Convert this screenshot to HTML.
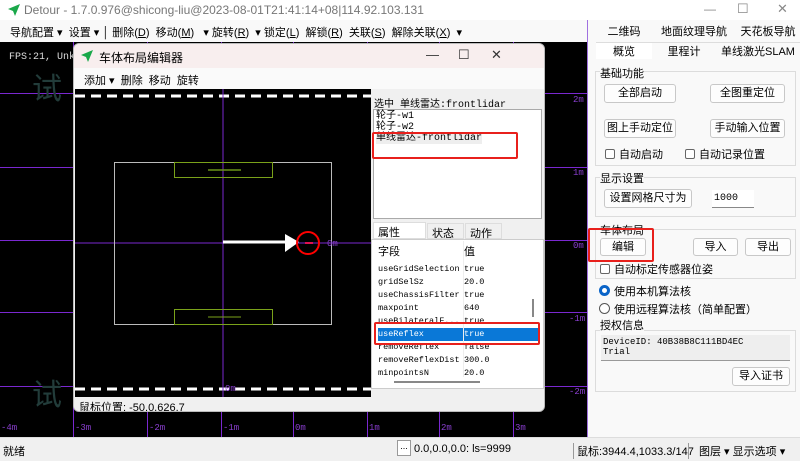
<!DOCTYPE html><html><head><meta charset="utf-8"><style>
*{margin:0;padding:0;box-sizing:border-box}
body{width:800px;height:461px;overflow:hidden;position:relative;background:#f0f0f0;font-family:"Liberation Sans","Noto Sans CJK SC",sans-serif;font-size:11px;color:#000}
.a{position:absolute;white-space:nowrap}
.btn{position:absolute;background:#fdfdfd;border:1px solid #c8c8c8;border-radius:3px;text-align:center;font-size:11px}
.mono{font-family:"Liberation Mono","Noto Sans CJK SC",monospace}
.grp{position:absolute;border:1px solid #dcdcdc;background:#f9f9f9}
.cb{display:inline-block;width:10px;height:10px;border:1px solid #666;border-radius:2px;background:#fff;vertical-align:-1px;margin-right:4px}
.lbl{position:absolute;color:#8a3fd0;font-size:9px;font-family:"Liberation Mono",monospace}
.r{height:13px;line-height:13px}.r span{display:inline-block;width:86px}
</style></head><body>
<div class="a" style="left:0;top:0;width:800px;height:20px;background:#fff"></div>
<svg class="a" style="left:7px;top:3px" width="14" height="14"><path d="M13 1 L1 6 L6 8 L8 13 Z" fill="#1aa84a"/></svg>
<div class="a" style="left:24px;top:3px;color:#777;font-size:12px">Detour - 1.7.0.976@shicong-liu@2023-08-01T21:41:14+08|114.92.103.131</div>
<div class="a" style="left:704px;top:2px;color:#888;font-size:12px">—</div>
<div class="a" style="left:737px;top:1px;color:#888;font-size:13px">☐</div>
<div class="a" style="left:777px;top:1px;color:#888;font-size:13px">✕</div>
<div class="a" style="left:0;top:20px;width:800px;height:22px;background:#f9f9f9"></div>
<div class="a" style="left:10px;top:24px;font-size:11px">导航配置 ▾ &nbsp;设置 ▾ │ 删除(<u>D</u>) &nbsp;移动(<u>M</u>) &nbsp; ▾ 旋转(<u>R</u>) &nbsp;▾ 锁定(<u>L</u>) &nbsp;解锁(<u>R</u>) &nbsp;关联(<u>S</u>) &nbsp;解除关联(<u>X</u>) &nbsp;▾</div>
<div class="a" style="left:0;top:42px;width:587px;height:395px;background:#000;overflow:hidden">
 <div class="a" style="left:0;top:51px;width:587px;height:1px;background:#7a28d0"></div>
 <div class="a" style="left:0;top:125px;width:587px;height:1px;background:#7a28d0"></div>
 <div class="a" style="left:0;top:198px;width:587px;height:1px;background:#7a28d0"></div>
 <div class="a" style="left:0;top:270px;width:587px;height:1px;background:#7a28d0"></div>
 <div class="a" style="left:0;top:344px;width:587px;height:1px;background:#7a28d0"></div>
 <div class="a" style="left:73px;top:0;width:1px;height:395px;background:#7a28d0"></div>
 <div class="a" style="left:147px;top:0;width:1px;height:395px;background:#7a28d0"></div>
 <div class="a" style="left:221px;top:0;width:1px;height:395px;background:#7a28d0"></div>
 <div class="a" style="left:293px;top:0;width:1px;height:395px;background:#7a28d0"></div>
 <div class="a" style="left:367px;top:0;width:1px;height:395px;background:#7a28d0"></div>
 <div class="a" style="left:439px;top:0;width:1px;height:395px;background:#7a28d0"></div>
 <div class="a" style="left:513px;top:0;width:1px;height:395px;background:#7a28d0"></div>
 <div class="a mono" style="left:9px;top:10px;color:#ddd;font-size:10px">FPS:21, Unknown</div>
 <div class="a" style="left:32px;top:22px;color:#223c3a;font-size:30px">试</div>
 <div class="a" style="left:32px;top:328px;color:#223c3a;font-size:30px">试</div>
 <div class="lbl" style="left:573px;top:53px">2m</div><div class="lbl" style="left:573px;top:126px">1m</div><div class="lbl" style="left:573px;top:199px">0m</div><div class="lbl" style="left:569px;top:272px">-1m</div><div class="lbl" style="left:569px;top:345px">-2m</div>
 <div class="lbl" style="left:1px;top:381px">-4m</div><div class="lbl" style="left:75px;top:381px">-3m</div><div class="lbl" style="left:149px;top:381px">-2m</div><div class="lbl" style="left:223px;top:381px">-1m</div><div class="lbl" style="left:295px;top:381px">0m</div><div class="lbl" style="left:369px;top:381px">1m</div><div class="lbl" style="left:441px;top:381px">2m</div><div class="lbl" style="left:515px;top:381px">3m</div>
</div>
<div class="a" style="left:73px;top:43px;width:472px;height:369px;background:#f0f0f0;border:1px solid #bbb;border-radius:6px;overflow:hidden">
 <div class="a" style="left:0;top:0;width:472px;height:24px;background:#f8eeee"></div>
 <svg class="a" style="left:6px;top:5px" width="14" height="14"><path d="M13 1 L1 6 L6 8 L8 13 Z" fill="#1aa84a"/></svg>
 <div class="a" style="left:25px;top:5px;font-size:12px">车体布局编辑器</div>
 <div class="a" style="left:352px;top:3px;font-size:13px;color:#333">—</div>
 <div class="a" style="left:384px;top:3px;font-size:13px;color:#333">☐</div>
 <div class="a" style="left:417px;top:3px;font-size:13px;color:#333">✕</div>
 <div class="a" style="left:0;top:24px;width:472px;height:21px;background:#fafafa"></div>
 <div class="a" style="left:10px;top:28px">添加 ▾ &nbsp;删除 &nbsp;移动 &nbsp;旋转</div>
 <svg class="a" style="left:1px;top:45px" width="296" height="308">
  <rect width="296" height="308" fill="#000"/>
  <line x1="0" y1="7" x2="296" y2="7" stroke="#fff" stroke-width="3" stroke-dasharray="10,6"/>
  <line x1="0" y1="300" x2="296" y2="300" stroke="#fff" stroke-width="3" stroke-dasharray="10,6"/>
  <line x1="148" y1="0" x2="148" y2="308" stroke="#7a28d0"/>
  <line x1="0" y1="154" x2="296" y2="154" stroke="#7a28d0"/>
  <rect x="39.5" y="73.5" width="217" height="162" fill="none" stroke="#bbb"/>
  <rect x="99.5" y="73.5" width="98" height="15" fill="none" stroke="#7aa21a"/>
  <rect x="99.5" y="220.5" width="98" height="15" fill="none" stroke="#7aa21a"/>
  <line x1="133" y1="81" x2="166" y2="81" stroke="#6a9418" stroke-width="1.5"/>
  <line x1="133" y1="228" x2="166" y2="228" stroke="#7aa21a"/>
  <line x1="148" y1="153" x2="212" y2="153" stroke="#fff" stroke-width="3"/>
  <path d="M210 145 L224 153 L210 163 Z" fill="#fff"/>
  <circle cx="233" cy="154" r="11" fill="none" stroke="#f00" stroke-width="2"/>
  <line x1="230" y1="154" x2="238" y2="154" stroke="#e01050" stroke-width="2"/>
  <text x="252" y="157" fill="#8a3fd0" font-size="9" font-family="Liberation Mono">0m</text>
  <text x="150" y="302" fill="#8a3fd0" font-size="9" font-family="Liberation Mono">0m</text>
 </svg>
 <div class="a" style="left:0;top:353px;width:472px;height:16px;background:#f0f0f0"></div>
 <div class="a" style="left:5px;top:355px">鼠标位置: -50.0,626.7</div>
 <div class="a mono" style="left:300px;top:51px;font-size:10px">选中 单线雷达:frontlidar</div>
 <div class="a mono" style="left:299px;top:65px;width:169px;height:110px;background:#fff;border:1px solid #aaa;font-size:10px;line-height:11px;padding:1px 2px">轮子-w1<br>轮子-w2<br><span style="background:#eee">单线雷达-frontlidar</span></div>
 <div class="a" style="left:298px;top:88px;width:146px;height:27px;border:2px solid #e8201c;border-radius:2px"></div>
 <div class="a" style="left:299px;top:178px;width:53px;height:17px;background:#fff;border:1px solid #ddd;padding:1px 4px">属性</div>
 <div class="a" style="left:353px;top:179px;width:37px;height:16px;border:1px solid #ddd;padding:1px 4px">状态</div>
 <div class="a" style="left:391px;top:179px;width:37px;height:16px;border:1px solid #ddd;padding:1px 4px">动作</div>
 <div class="a" style="left:297px;top:195px;width:173px;height:150px;background:#fff;border:1px solid #ccc"></div>
 <div class="a mono" style="left:304px;top:199px;width:160px;height:134px;font-size:8.5px;overflow:hidden">
  <div style="height:20px;line-height:18px;font-size:11px;font-family:'Liberation Sans','Noto Sans CJK SC',sans-serif"><span style="display:inline-block;width:86px">字段</span>值</div>
  <div class="r"><span>useGridSelection</span>true</div>
  <div class="r"><span>gridSelSz</span>20.0</div>
  <div class="r"><span>useChassisFilter</span>true</div>
  <div class="r"><span>maxpoint</span>640</div>
  <div class="r"><span>useBilateralF...</span>true</div>
  <div class="r" style="background:#0a78d7;color:#fff"><span>useReflex</span>true</div>
  <div class="r"><span>removeReflex</span>false</div>
  <div class="r"><span>removeReflexDist</span>300.0</div>
  <div class="r"><span>minpointsN</span>20.0</div>
 </div>
 <div class="a" style="left:389px;top:197px;width:1px;height:136px;background:#eee"></div>
 <div class="a" style="left:458px;top:255px;width:2px;height:18px;background:#888"></div>
 <div class="a" style="left:320px;top:337px;width:86px;height:2px;background:#888"></div>
 <div class="a" style="left:300px;top:278px;width:166px;height:23px;border:2px solid #e8201c;border-radius:2px"></div>
</div>
<div class="a" style="left:587px;top:20px;width:213px;height:417px;background:#f9f9f9;border-left:1px solid #a070e0"></div>
<div class="a" style="left:596px;top:23px;width:204px;height:19px;font-size:11px"><span style="display:inline-block;width:56px;text-align:center">二维码</span><span style="display:inline-block;width:84px;text-align:center">地面纹理导航</span><span style="display:inline-block;width:64px;text-align:center">天花板导航</span></div>
<div class="a" style="left:596px;top:42px;width:204px;height:20px;font-size:11px;border-top:1px solid #ddd"><span style="display:inline-block;width:56px;text-align:center;background:#fff">概览</span><span style="display:inline-block;width:64px;text-align:center">里程计</span><span style="display:inline-block;width:84px;text-align:center">单线激光SLAM</span></div>
<div class="grp" style="left:595px;top:71px;width:201px;height:95px"></div>
<div class="a" style="left:600px;top:65px;background:#f9f9f9">基础功能</div>
<div class="btn" style="left:604px;top:84px;width:72px;height:19px;line-height:17px">全部启动</div>
<div class="btn" style="left:710px;top:84px;width:75px;height:19px;line-height:17px">全图重定位</div>
<div class="btn" style="left:604px;top:119px;width:72px;height:19px;line-height:17px">图上手动定位</div>
<div class="btn" style="left:710px;top:119px;width:75px;height:19px;line-height:17px">手动输入位置</div>
<div class="a" style="left:605px;top:146px"><span class="cb"></span>自动启动</div>
<div class="a" style="left:685px;top:146px"><span class="cb"></span>自动记录位置</div>
<div class="grp" style="left:595px;top:177px;width:201px;height:40px"></div>
<div class="a" style="left:600px;top:170px;background:#f9f9f9">显示设置</div>
<div class="btn" style="left:604px;top:189px;width:88px;height:19px;line-height:17px">设置网格尺寸为</div>
<div class="a mono" style="left:712px;top:190px;width:42px;height:18px;background:#fff;border-bottom:1px solid #888;font-size:10px;padding:3px 2px">1000</div>
<div class="grp" style="left:595px;top:229px;width:201px;height:50px"></div>
<div class="a" style="left:600px;top:222px">车体布局</div>
<div class="btn" style="left:600px;top:238px;width:46px;height:18px;line-height:16px">编辑</div>
<div class="a" style="left:588px;top:228px;width:66px;height:34px;border:2px solid #e8201c;border-radius:2px"></div>
<div class="btn" style="left:693px;top:238px;width:45px;height:18px;line-height:16px">导入</div>
<div class="btn" style="left:745px;top:238px;width:46px;height:18px;line-height:16px">导出</div>
<div class="a" style="left:600px;top:261px"><span class="cb"></span>自动标定传感器位姿</div>
<div class="a" style="left:599px;top:283px"><span style="display:inline-block;width:11px;height:11px;border-radius:50%;border:3px solid #0a64c8;background:#fff;vertical-align:-1px;margin-right:4px"></span>使用本机算法核</div>
<div class="a" style="left:599px;top:301px"><span style="display:inline-block;width:11px;height:11px;border-radius:50%;border:1px solid #555;background:#fff;vertical-align:-1px;margin-right:4px"></span>使用远程算法核（简单配置）</div>
<div class="grp" style="left:595px;top:330px;width:201px;height:62px"></div>
<div class="a" style="left:600px;top:317px;background:#f9f9f9">授权信息</div>
<div class="a mono" style="left:601px;top:335px;width:189px;height:26px;background:#eee;border-bottom:1px solid #999;font-size:9px;line-height:10px;padding:2px 2px">DeviceID: 40B38B8C111BD4EC<br>Trial</div>
<div class="btn" style="left:732px;top:367px;width:58px;height:19px;line-height:17px">导入证书</div>
<div class="a" style="left:0;top:437px;width:800px;height:24px;background:#f0f0f0;border-top:1px solid #ddd"></div>
<div class="a" style="left:3px;top:443px">就绪</div>
<div class="a" style="left:397px;top:440px;width:14px;height:16px;border:1px solid #999;background:#fff;font-size:9px;text-align:center">...</div>
<div class="a" style="left:414px;top:443px">0.0,0.0,0.0: ls=9999</div>
<div class="a" style="left:573px;top:443px;border-left:1px solid #999;padding-left:3px">鼠标:3944.4,1033.3/147</div>
<div class="a" style="left:688px;top:443px;border-left:1px solid #999;padding-left:10px">图层 ▾ 显示选项 ▾</div>
</body></html>
